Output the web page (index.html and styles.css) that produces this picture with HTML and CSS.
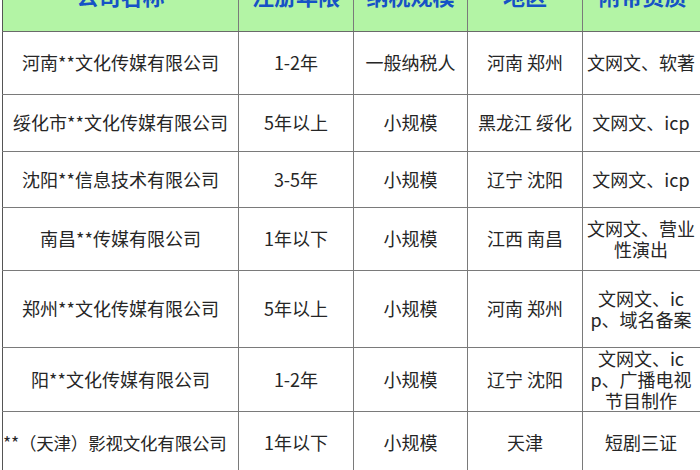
FILE: index.html
```html
<!DOCTYPE html>
<html lang="zh">
<head>
<meta charset="utf-8">
<title>公司转让</title>
<link rel="stylesheet" href="styles.css">
</head>
<body>
<table class="grid">
  <colgroup>
    <col class="c-name">
    <col class="c-year">
    <col class="c-tax">
    <col class="c-area">
    <col class="c-qual">
  </colgroup>
  <thead>
    <tr class="head">
      <th>公司名称</th>
      <th>注册年限</th>
      <th>纳税规模</th>
      <th>地区</th>
      <th>附带资质</th>
    </tr>
  </thead>
  <tbody>
    <tr class="r1"><td>河南**文化传媒有限公司</td><td>1-2年</td><td>一般纳税人</td><td>河南 郑州</td><td class="q">文网文、软著</td></tr>
    <tr class="r2"><td>绥化市**文化传媒有限公司</td><td>5年以上</td><td>小规模</td><td>黑龙江 绥化</td><td class="q">文网文、icp</td></tr>
    <tr class="r3"><td>沈阳**信息技术有限公司</td><td>3-5年</td><td>小规模</td><td>辽宁 沈阳</td><td class="q">文网文、icp</td></tr>
    <tr class="r4"><td>南昌**传媒有限公司</td><td>1年以下</td><td>小规模</td><td>江西 南昌</td><td class="q">文网文、营业性演出</td></tr>
    <tr class="r5"><td>郑州**文化传媒有限公司</td><td>5年以上</td><td>小规模</td><td>河南 郑州</td><td class="q">文网文、icp、域名备案</td></tr>
    <tr class="r6"><td>阳**文化传媒有限公司</td><td>1-2年</td><td>小规模</td><td>辽宁 沈阳</td><td class="q">文网文、icp、广播电视节目制作</td></tr>
    <tr class="r7"><td class="tight">**（天津）影视文化有限公司</td><td>1年以下</td><td>小规模</td><td>天津</td><td class="q">短剧三证</td></tr>
  </tbody>
</table>
</body>
</html>
```

FILE: styles.css
```css
html, body {
  margin: 0;
  padding: 0;
  background: #ffffff;
  overflow: hidden;
  width: 700px;
  height: 470px;
}

.grid {
  margin: -16px 0 0 2px;
  border-collapse: collapse;
  table-layout: fixed;
  width: 700px;
  font-family: "Noto Sans CJK SC", "Microsoft YaHei", sans-serif;
  color: #262626;
}

.c-name { width: 236px; }
.c-year { width: 115px; }
.c-tax { width: 114px; }
.c-area { width: 115px; }
.c-qual { width: 120px; }

.grid th,
.grid td {
  border: 1px solid #7a7a7a;
  text-align: center;
  padding: 0 3px;
}

.grid th {
  background: #b3f4a5;
  color: #1652c6;
  font-weight: 700;
  font-size: 22px;
  line-height: 22px;
  vertical-align: top;
  border-bottom: 1px solid #6a6a6a;
  border-top: none;
}

.grid tr:first-child th:first-child,
.grid td:first-child {
  border-left: 1px solid #555;
}

.head { height: 47px; }

.grid td {
  font-size: 18px;
  line-height: 21px;
  vertical-align: middle;
  white-space: nowrap;
}

.grid td.q {
  white-space: normal;
  word-break: break-all;
  padding: 0 7px 0 4px;
}

.grid td.tight {
  padding: 0;
  font-size: 17.5px;
  text-align: left;
  letter-spacing: -0.2px;
  overflow: hidden;
}

.r1 { height: 63px; }
.r2 { height: 57px; }
.r3 { height: 56px; }
.r4 { height: 63px; }
.r5 { height: 77px; }
.r6 { height: 63px; }
.r7 { height: 63px; }
```
